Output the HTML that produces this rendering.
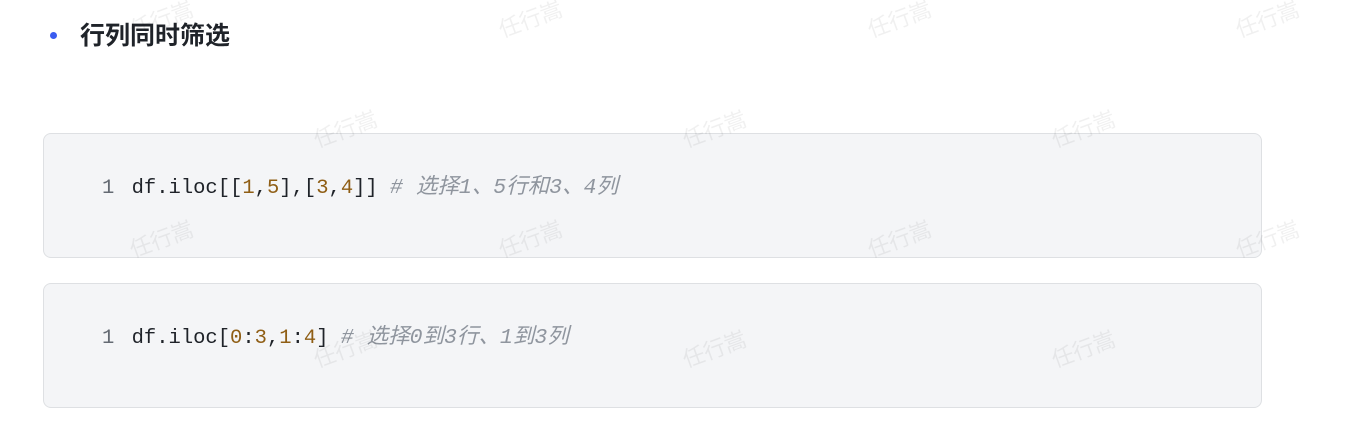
<!DOCTYPE html>
<html><head><meta charset="utf-8"><style>
body{margin:0;width:1369px;height:428px;background:#fff;position:relative;overflow:hidden;font-family:"Liberation Sans","Noto Sans CJK SC",sans-serif}
.dot{position:absolute;left:50px;top:32px;width:7px;height:7px;border-radius:50%;background:#3a5cf0}
h3{position:absolute;left:80px;top:19px;margin:0;font-size:25px;font-weight:bold;color:#1f2329;line-height:34px}
.box{position:absolute;left:43px;width:1217px;height:123px;background:#f4f5f7;border:1px solid #dee0e3;border-radius:8px}
.code{position:absolute;left:102px;font-family:"Liberation Mono","Noto Sans CJK SC",monospace;font-size:20.5px;color:#1f2329;line-height:28px;white-space:pre}
.ln{color:#646a73;margin-right:5px}.n{color:#8f5e15}.c{color:#8f959e;font-style:italic;font-size:21.5px}
.wm{position:absolute;color:rgba(0,0,0,0.06);font-size:22px;transform:rotate(-20deg);white-space:nowrap}
</style></head><body>
<div class="dot"></div><h3>行列同时筛选</h3>
<div class="box" style="top:133px"></div>
<div class="box" style="top:283px"></div>
<div class="code" style="top:174px"><span class="ln">1</span> df.iloc[[<span class="n">1</span>,<span class="n">5</span>],[<span class="n">3</span>,<span class="n">4</span>]] <span class="c"># 选择1、5行和3、4列</span></div>
<div class="code" style="top:324px"><span class="ln">1</span> df.iloc[<span class="n">0</span>:<span class="n">3</span>,<span class="n">1</span>:<span class="n">4</span>] <span class="c"># 选择0到3行、1到3列</span></div>
<div class="wm" style="left:128px;top:2px">任行嵩</div>
<div class="wm" style="left:497px;top:2px">任行嵩</div>
<div class="wm" style="left:866px;top:2px">任行嵩</div>
<div class="wm" style="left:1234px;top:2px">任行嵩</div>
<div class="wm" style="left:312px;top:112px">任行嵩</div>
<div class="wm" style="left:681px;top:112px">任行嵩</div>
<div class="wm" style="left:1050px;top:112px">任行嵩</div>
<div class="wm" style="left:128px;top:222px">任行嵩</div>
<div class="wm" style="left:497px;top:222px">任行嵩</div>
<div class="wm" style="left:866px;top:222px">任行嵩</div>
<div class="wm" style="left:1234px;top:222px">任行嵩</div>
<div class="wm" style="left:312px;top:332px">任行嵩</div>
<div class="wm" style="left:681px;top:332px">任行嵩</div>
<div class="wm" style="left:1050px;top:332px">任行嵩</div>
</body></html>
